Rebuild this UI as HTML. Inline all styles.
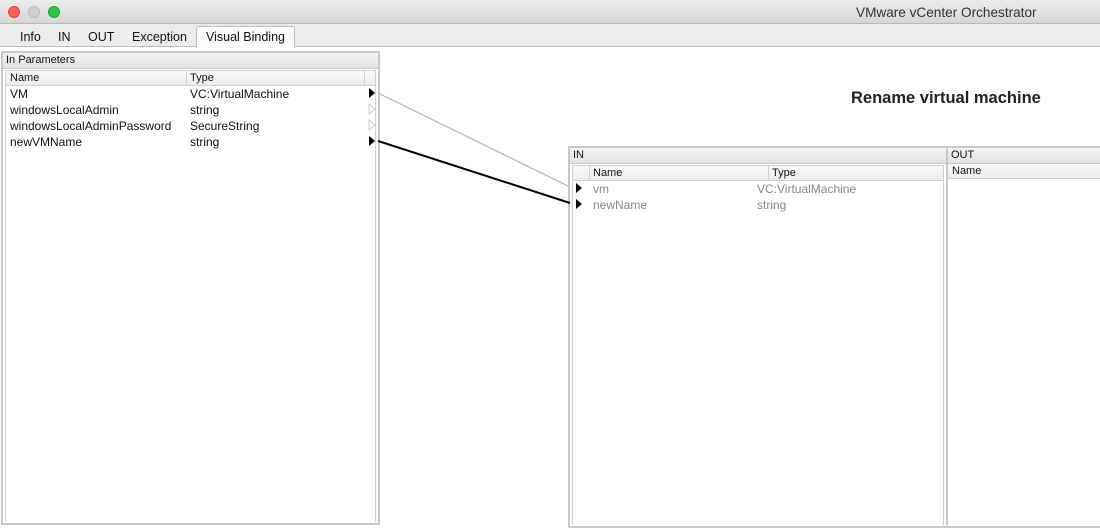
<!DOCTYPE html>
<html><head><style>
*{margin:0;padding:0;box-sizing:border-box}
body{width:1100px;height:526px;overflow:hidden;background:#fff;font-family:"Liberation Sans",sans-serif;font-size:12px;color:#111;position:relative}
.abs{position:absolute}
.title{left:0;top:0;width:1100px;height:24px;background:linear-gradient(#ececec,#d6d6d6);border-bottom:1px solid #b8b8b8}
.dot{top:6px;width:12px;height:12px;border-radius:50%}
.tabs{left:0;top:24px;width:1100px;height:23px;background:#ececec;border-bottom:1px solid #bdbdbd}
.tab{top:4px;font-size:12.5px}
.panel{border:2px solid #c8c8cc;background:#fff}
.hdr{background:linear-gradient(#f4f4f4,#e2e2e2);border-bottom:1px solid #c8c8c8;font-size:11px;padding-left:3px;height:16px;line-height:15px}
.colh{background:linear-gradient(#fafafa,#ececec);border-bottom:1px solid #d0d0d0;font-size:11px;height:15px;line-height:14px}
.row{height:16px;line-height:16px;font-size:12px}
.gray{color:#888}
</style></head><body>
<div class="abs title"></div>
<div class="abs dot" style="left:8px;background:#fc5f57;border:1px solid #e0443e"></div>
<div class="abs dot" style="left:28px;background:#d0d0d0;border:1px solid #bbb"></div>
<div class="abs dot" style="left:48px;background:#28c840;border:1px solid #1aab29"></div>
<div class="abs" style="left:856px;top:5px;font-size:13.6px;color:#333">VMware vCenter Orchestrator</div>
<div class="abs tabs"></div>
<div class="abs" style="left:196px;top:26px;width:99px;height:22px;background:#fafafa;border:1px solid #bdbdbd;border-bottom:none;border-radius:3px 3px 0 0"></div>
<div class="abs tab" style="left:20px;top:30px">Info</div>
<div class="abs tab" style="left:58px;top:30px">IN</div>
<div class="abs tab" style="left:88px;top:30px">OUT</div>
<div class="abs tab" style="left:132px;top:30px">Exception</div>
<div class="abs tab" style="left:206px;top:30px">Visual Binding</div>

<div class="abs panel" style="left:1px;top:51px;width:379px;height:474px">
 <div class="hdr">In Parameters</div>
 <div style="margin:1px 2px 0 2px;border:1px solid #d0d0d0;border-bottom:none;height:452px;position:relative">
  <div class="colh" style="position:relative">
   <span class="abs" style="left:4px">Name</span>
   <span class="abs" style="left:180px;top:0;height:15px;border-left:1px solid #d0d0d0"></span>
   <span class="abs" style="left:184px">Type</span>
   <span class="abs" style="left:358px;top:0;height:15px;border-left:1px solid #d0d0d0"></span>
  </div>
  <div class="row" style="position:relative"><span class="abs" style="left:4px">VM</span><span class="abs" style="left:184px">VC:VirtualMachine</span></div>
  <div class="row" style="position:relative"><span class="abs" style="left:4px">windowsLocalAdmin</span><span class="abs" style="left:184px">string</span></div>
  <div class="row" style="position:relative"><span class="abs" style="left:4px">windowsLocalAdminPassword</span><span class="abs" style="left:184px">SecureString</span></div>
  <div class="row" style="position:relative"><span class="abs" style="left:4px">newVMName</span><span class="abs" style="left:184px">string</span></div>
 </div>
</div>

<div class="abs" style="left:851px;top:89px;font-size:16.5px;font-weight:bold;color:#222">Rename virtual machine</div>

<div class="abs panel" style="left:568px;top:146px;width:380px;height:382px">
 <div class="hdr">IN</div>
 <div style="margin:1px 2px 0 2px;border:1px solid #d0d0d0;border-bottom:none;height:360px;position:relative">
  <div class="colh" style="position:relative">
   <span class="abs" style="left:16px;top:0;height:15px;border-left:1px solid #d0d0d0"></span>
   <span class="abs" style="left:20px">Name</span>
   <span class="abs" style="left:195px;top:0;height:15px;border-left:1px solid #d0d0d0"></span>
   <span class="abs" style="left:199px">Type</span>
  </div>
  <div class="row gray" style="position:relative"><span class="abs" style="left:20px">vm</span><span class="abs" style="left:184px">VC:VirtualMachine</span></div>
  <div class="row gray" style="position:relative"><span class="abs" style="left:20px">newName</span><span class="abs" style="left:184px">string</span></div>
 </div>
</div>
<div class="abs panel" style="left:946px;top:146px;width:160px;height:382px;border-right:none">
 <div class="hdr">OUT</div>
 <div class="colh" style="padding-left:4px">Name</div>
</div>

<svg class="abs" style="left:0;top:0" width="1100" height="526">
 <line x1="378" y1="93" x2="570" y2="187" stroke="#bbb" stroke-width="1.3"/>
 <line x1="378" y1="141" x2="570" y2="203" stroke="#000" stroke-width="2"/>
 <polygon points="369,88 375,93 369,98" fill="#000"/>
 <polygon points="369,104 375,109 369,114" fill="none" stroke="#ccc"/>
 <polygon points="369,120 375,125 369,130" fill="none" stroke="#ccc"/>
 <polygon points="369,136 375,141 369,146" fill="#000"/>
 <polygon points="576,183 582,188 576,193" fill="#000"/>
 <polygon points="576,199 582,204 576,209" fill="#000"/>
</svg>
</body></html>
